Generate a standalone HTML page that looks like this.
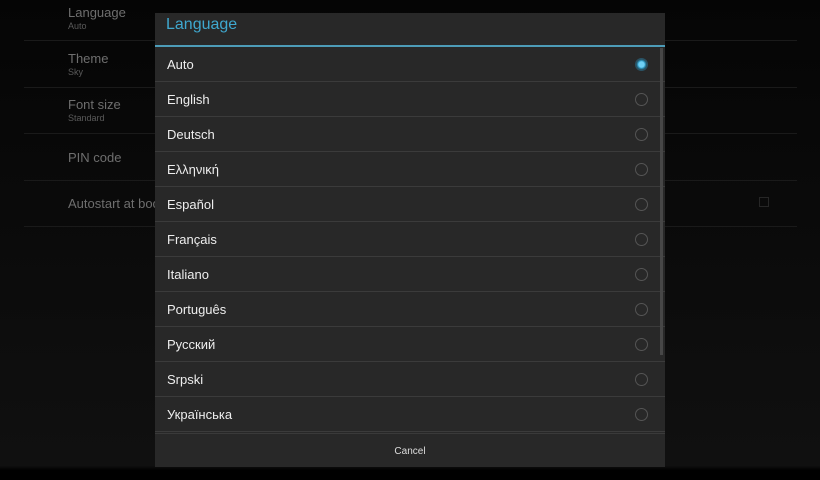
<!DOCTYPE html>
<html><head><meta charset="utf-8"><style>
*{margin:0;padding:0;box-sizing:border-box}
body{width:820px;height:480px;overflow:hidden;background:linear-gradient(#050505,#0c0c0c 60%,#101010 97%,#000 98%);font-family:"Liberation Sans",sans-serif;position:relative}
.s{position:absolute;left:68px;color:#6e6e6e}
.s b{font-weight:normal;font-size:13px;display:block}
.s i{font-style:normal;font-size:9px;display:block;color:#5a5a5a;margin-top:1px}
.dv{position:absolute;left:24px;width:773px;height:1px;background:#1a1a1a}
.dlg{position:absolute;left:155px;top:13px;width:510px;height:454px;background:#282828}
.t{height:32px;color:#3fa8cf;font-size:16px;padding:3px 0 0 11px}
.bl{height:2px;background:#4d9cb8}
.r{height:35px;border-bottom:1px solid #3b3b3b;color:#eee;font-size:13px;padding:10px 0 0 12px;position:relative}
.r:after{content:"";position:absolute;right:17px;top:11px;width:11px;height:11px;border:1px solid #555;border-radius:50%}
.r.on:after{border-color:#2a5466;background:radial-gradient(#6fd0f5 35%,#2a90b8 50%,#2a4652 70%)}
.sb{position:absolute;left:505px;top:35px;width:3px;height:307px;background:#474747}
.c{position:absolute;bottom:0;left:0;right:0;height:34px;border-top:1px solid #3a3a3a;color:#ddd;font-size:10px;text-align:center;padding-top:12px}
</style></head><body>
<div class="s" style="top:5px"><b>Language</b><i>Auto</i></div>
<div class="dv" style="top:40px"></div>
<div class="s" style="top:51px"><b>Theme</b><i>Sky</i></div>
<div class="dv" style="top:87px"></div>
<div class="s" style="top:97px"><b>Font size</b><i>Standard</i></div>
<div class="dv" style="top:133px"></div>
<div class="s" style="top:150px"><b>PIN code</b></div>
<div class="dv" style="top:180px"></div>
<div class="s" style="top:196px"><b>Autostart at boot</b></div>
<div class="dv" style="top:226px"></div>
<div style="position:absolute;left:759px;top:197px;width:10px;height:10px;border:1px solid #262626"></div>
<div class="dlg">
<div class="t">Language</div><div class="bl"></div>
<div class="r on">Auto</div><div class="r">English</div><div class="r">Deutsch</div><div class="r">Ελληνική</div><div class="r">Español</div><div class="r">Français</div><div class="r">Italiano</div><div class="r">Português</div><div class="r">Русский</div><div class="r">Srpski</div><div class="r">Українська</div>
<div class="sb"></div>
<div class="c">Cancel</div>
</div>
</body></html>
